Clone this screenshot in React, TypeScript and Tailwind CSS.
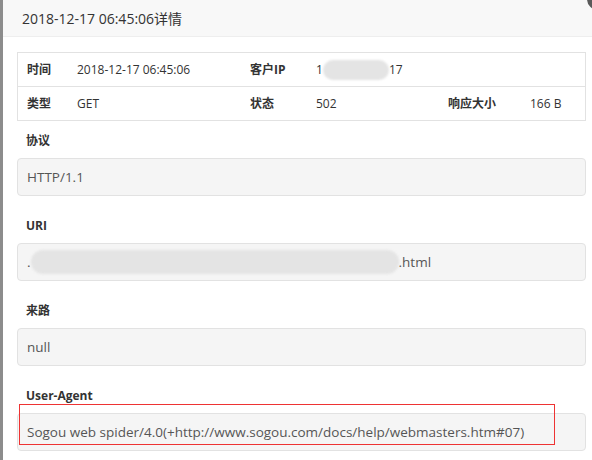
/* Request log detail dialog: header, summary table and read-only fields. */

const font = "font-['Open_Sans','Noto_Sans_CJK_SC',sans-serif]";

function Blur({ w, h = 20 }: { w: number; h?: number }) {
  return (
    <span
      className="inline-block rounded-full bg-[#e4e4e4] blur-[1px] align-middle"
      style={{ width: w, height: h }}
    />
  );
}

function Field({ label, children, first }: { label: string; children: React.ReactNode; first?: boolean }) {
  return (
    <div className={first ? "mt-[10px]" : "mt-[20px]"}>
      <div className="flex h-[20px] items-center pl-[9px] text-[12px] font-bold text-[#333]">{label}</div>
      <div className="mt-[7px] flex h-[38px] items-center rounded-[4px] border border-[#e2e2e2] bg-[#f5f5f5] pl-[9px] text-[13.5px] text-[#555]">
        {children}
      </div>
    </div>
  );
}

export default function App() {
  const cell = "flex items-center pl-[9px]";
  return (
    <div className={`relative flex h-[460px] w-[592px] overflow-hidden bg-[#8c8c8c] ${font}`}>
      <div className="relative ml-[3px] h-[460px] w-[600px] shrink-0 bg-white">
        <div className="flex h-[37px] items-center border-b border-[#eee] bg-[#f8f8f8] pl-[19px] text-[14px] text-[#333]">
          2018-12-17 06:45:06详情
        </div>
        <div className="absolute left-[584px] top-[-12px] h-[22px] w-[22px] rounded-full bg-[#5a5a5a]" />

        <div className="px-[14px] pt-[15px]">
          <div className="w-[569px] border border-[#e2e2e2] text-[12px] text-[#333]">
            <div className="grid h-[33px] grid-cols-[50px_173px_66px_1fr]">
              <div className={`${cell} font-bold`}>时间</div>
              <div className={cell}>2018-12-17 06:45:06</div>
              <div className={`${cell} font-bold`}>客户IP</div>
              <div className={cell}>
                1<Blur w={66} />17
              </div>
            </div>
            <div className="grid h-[34px] grid-cols-[50px_173px_66px_132px_82px_1fr] border-t border-[#e2e2e2]">
              <div className={`${cell} font-bold`}>类型</div>
              <div className={cell}>GET</div>
              <div className={`${cell} font-bold`}>状态</div>
              <div className={cell}>502</div>
              <div className={`${cell} font-bold`}>响应大小</div>
              <div className={cell}>166 B</div>
            </div>
          </div>

          <div className="w-[569px]">
            <Field label="协议" first>HTTP/1.1</Field>
            <Field label="URI">
              <span className="self-end pb-[8px]">.</span>
              <Blur w={368} h={24} />
              <span>.html</span>
            </Field>
            <Field label="来路">null</Field>
            <Field label="User-Agent">
              Sogou web spider/4.0(+http://www.sogou.com/docs/help/webmasters.htm#07)
            </Field>
          </div>
        </div>

        <div className="absolute left-[16px] top-[404px] h-[41px] w-[536px] border border-[#e33]" />
      </div>
    </div>
  );
}
